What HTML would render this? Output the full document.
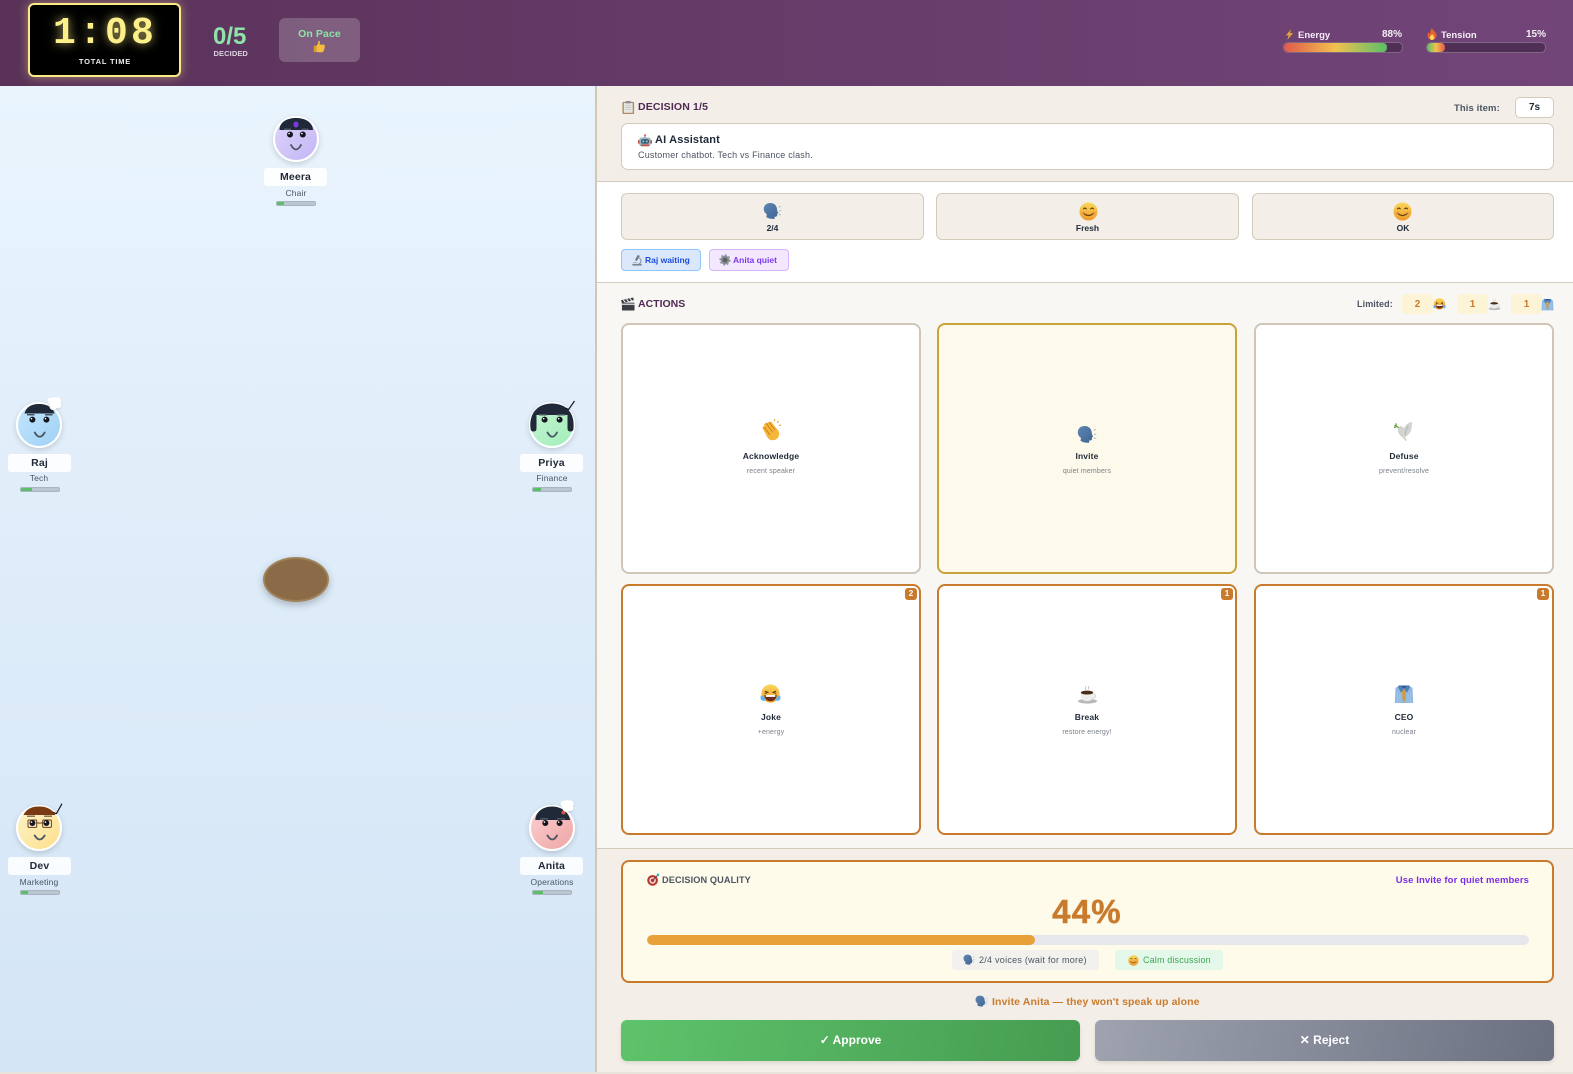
<!DOCTYPE html>
<html><head><meta charset="utf-8"><title>Meeting</title>
<style>
*{box-sizing:border-box;margin:0;padding:0}
html,body{width:1573px;height:1074px;overflow:hidden;background:#e8e4dc;font-family:"Liberation Sans",sans-serif}
.a{position:absolute}
.t{position:absolute;white-space:nowrap;line-height:1}
.c{text-align:center}
.b{font-weight:700}
svg{position:absolute;overflow:visible}
.av{position:absolute;width:46px;height:46px;border-radius:50%;border:2px solid #fff;box-shadow:0 2px 6px rgba(0,0,0,.16)}
.nm{position:absolute;width:63px;height:18px;background:rgba(255,255,255,.85);border-radius:3px;font:700 10.5px/18px "Liberation Sans",sans-serif;color:#1f2937;text-align:center;letter-spacing:.15px}
.rl{position:absolute;width:80px;font-size:8.5px;line-height:10px;color:#4b5563;text-align:center;letter-spacing:.15px}
.en{position:absolute;width:40px;height:5px;background:#b9c5cf;border:1px solid #a9b5bf;border-radius:2px;overflow:hidden}
.en i{display:block;height:100%;background:#5abf68}
.card{position:absolute;width:300px;height:251px;border:2px solid #cfc6b8;border-radius:8px;background:#fff}
.stat{position:absolute;top:193px;height:47px;background:#f3eee8;border:1px solid #d5cbbd;border-radius:6px}
.ti{font:700 8.5px/10px "Liberation Sans",sans-serif;color:#1f2937;letter-spacing:.15px}
.su{font:7px/8px "Liberation Sans",sans-serif;color:#7a808a;letter-spacing:.15px}
.bd{position:absolute;width:12px;height:12px;background:#c97b2d;border-radius:3px;color:#fff;font:700 8px/12px "Liberation Sans",sans-serif;text-align:center}
.lim{position:absolute;top:294px;width:31px;height:20px;background:#fdf3d6;border-radius:4px;color:#c97b2d;font:700 10px/22px "Liberation Sans",sans-serif;text-align:center}
.eye{fill:#15151f}
.hl{fill:#fff}
.sm{stroke:#4b5563;stroke-width:1.8;fill:none;stroke-linecap:round}
.cl{filter:drop-shadow(0 1px 1px rgba(0,0,0,.12))}
</style></head><body>
<svg width="0" height="0" style="position:absolute"><defs>
<linearGradient id="gy" x1="0" y1="0" x2="0" y2="1"><stop offset="0" stop-color="#fbd75a"/><stop offset="1" stop-color="#ee9a2b"/></linearGradient>
<linearGradient id="gs" x1="0" y1="0" x2="1" y2="1"><stop offset="0" stop-color="#5f86b3"/><stop offset="1" stop-color="#3f6593"/></linearGradient>
<symbol id="head" viewBox="0 0 20 20"><path d="M7.500 1C3.600 1 .8 3.700.8 7.300c0 2.400 1.200 4.400 3.100 5.500v.5l-.4 2.500c2 1.800 6 2.300 8.800 1.800l-.2-2.100h1.300c1-.1 1.600-.8 1.600-1.800v-1.500l1.200-.6-1.300-2.500C14.900 4.500 12.700 1 7.500 1z" fill="url(#gs)"/><path d="M16.700 5.500l1.900-1.200M17 9.200h2.300M16.700 12.500l1.900 1.300" stroke="#93aac4" stroke-width=".9" fill="none"/></symbol>
<symbol id="smile" viewBox="0 0 20 20"><circle cx="10" cy="10" r="9.500" fill="url(#gy)"/><path d="M4.500 7.500q1.700-2.200 3.400 0M12.100 7.500q1.700-2.200 3.400 0" stroke="#5b3a14" stroke-width="1.100" fill="none"/><path d="M4.500 11.500q5.500 5.500 11 0" stroke="#6b4216" stroke-width="1.200" fill="none"/><ellipse cx="4.300" cy="11.500" rx="2" ry="1.200" fill="#f28a55" opacity=".5"/><ellipse cx="15.700" cy="11.500" rx="2" ry="1.200" fill="#f28a55" opacity=".5"/></symbol>
<symbol id="clap" viewBox="0 0 22 22"><path d="M4 5l7-2.500 7.500 9.500c1.500 3 .5 6.500-2.500 8.500-3.500 1.500-7 .5-8.500-2L2.500 9c-.5-1 1-2 1.800-1.200L4 5z" fill="#f6b63a"/><path d="M6 4l6.500 9M9 3l6 8M4 8l6 8" stroke="#c47c14" stroke-width=".9" fill="none"/><path d="M14 2l1-1.800M17 3.500l1.700-1.300M19 6.500l2-.5" stroke="#e0962a" stroke-width="1"/></symbol>
<symbol id="dove" viewBox="0 0 22 22"><path d="M20 1c-4 .5-7 3-8.500 6.500C10 5.500 8 4.500 6.500 6 4.500 7.500 4.500 11 7 14.500c1 1.500 2 2 2.500 2l3.500 4.500 1.500-.8-2-3.500c3-1 6.500-5 7-9.500.2-2.500.5-4.500.5-6.200z" fill="#d2d4d0"/><path d="M16 5c-2 3-3 6-3 10" stroke="#a9aca8" stroke-width=".8" fill="none"/><path d="M6 7L1.500 4.500M3 2.500l.5 3M1 6.500l2 .5" stroke="#5e9a3a" stroke-width="1.300" fill="none"/></symbol>
<symbol id="joke" viewBox="0 0 22 22"><circle cx="11" cy="10" r="9.500" fill="url(#gy)"/><path d="M5 7.500l3.200 1.200L5 10M17 7.500l-3.200 1.200L17 10" stroke="#5b3a14" stroke-width="1.100" fill="none"/><path d="M4.500 11.500h13c0 4-3 6.500-6.500 6.500s-6.500-2.500-6.500-6.500z" fill="#6b2c1d"/><rect x="6" y="11.500" width="10" height="2" fill="#fff"/><path d="M1 12c2 0 4 1.500 4.500 5-2 1.500-4.500 0-5-2 0-1.500.3-2.500.5-3zM21 12c-2 0-4 1.500-4.500 5 2 1.500 4.500 0 5-2 0-1.500-.3-2.500-.5-3z" fill="#63b3ee"/></symbol>
<symbol id="coffee" viewBox="0 0 22 22"><ellipse cx="11" cy="18" rx="10" ry="2.500" fill="#b6b8ba"/><path d="M4 9h13v4c0 3-2.500 5-6.500 5S4 16 4 13z" fill="#eceded"/><ellipse cx="10.500" cy="9" rx="6.500" ry="2" fill="#4a2c17"/><path d="M17 10.500c3 0 3 4-.5 4.500" stroke="#d5d6d7" stroke-width="1.300" fill="none"/><path d="M9 6c-1-1.500 1-2 0-4M12 6c-1-1.500 1-2 0-4" stroke="#bbb" stroke-width=".8" fill="none"/></symbol>
<symbol id="shirt" viewBox="0 0 20 20"><path d="M5 1.500L1.500 4 .8 19h18.400l-.7-15L15 1.500z" fill="#8fb8e3"/><path d="M6 1.500h8L10 5z" fill="#2c5a94"/><path d="M5.500 1l4.500 4.500-3 3L4 3zM14.500 1L10 5.500l3 3L16 3z" fill="#4d7fb8"/><path d="M9 5.500h2l.8 2-.5 8-1.300 3.500-1.300-3.500-.5-8z" fill="#d89a2f"/><path d="M3.500 8v11M6 9v10M14 9v10M16.500 8v11" stroke="#a8cbef" stroke-width=".7"/></symbol>
<symbol id="target" viewBox="0 0 14 14"><circle cx="6" cy="8" r="5.700" fill="#b5322c"/><circle cx="6" cy="8" r="3.600" fill="#f0d8d4"/><circle cx="6" cy="8" r="1.900" fill="#c8372f"/><path d="M6 8l6-6" stroke="#444" stroke-width="1"/><path d="M10.500 1l2.500-.5-.3 2.800-2 .2z" fill="#35a3b5"/></symbol>
<symbol id="robot" viewBox="0 0 16 16"><rect x="1.500" y="4" width="13" height="10" rx="2.500" fill="#9bb6c4"/><rect x="3.500" y="6" width="9" height="5" rx="2" fill="#3c4a57"/><circle cx="6" cy="8.500" r="1.300" fill="#65c7e8"/><circle cx="10" cy="8.500" r="1.300" fill="#65c7e8"/><rect x="7.300" y="1.500" width="1.400" height="3" fill="#7f98a6"/><circle cx="8" cy="1.500" r="1.200" fill="#e05a4b"/><rect x="0" y="7" width="1.700" height="4" fill="#c2533f"/><rect x="14.300" y="7" width="1.700" height="4" fill="#c2533f"/><rect x="3.500" y="12" width="9" height="2" fill="#c2533f"/></symbol>
<symbol id="micro" viewBox="0 0 14 14"><path d="M8 1l2.300 1.200-3.500 6-2.200-1.200z" fill="#6d7884"/><path d="M9.500 4.500c3 1.800 2.700 6-.3 7" stroke="#8f98a2" stroke-width="1.400" fill="none"/><rect x="1.500" y="11.500" width="11" height="2" rx=".7" fill="#7c858f"/><rect x="2.500" y="9.500" width="5" height="1" fill="#a9b0b7"/></symbol>
<symbol id="gear" viewBox="0 0 14 14"><circle cx="7" cy="7" r="5.200" fill="#8a8f96"/><circle cx="7" cy="7" r="5.800" fill="none" stroke="#8a8f96" stroke-width="1.400" stroke-dasharray="2.200 2.300"/><circle cx="7" cy="7" r="2.800" fill="#5b6068"/></symbol>
<symbol id="clip" viewBox="0 0 14 14"><rect x=".5" y="1" width="12.500" height="13" rx="1" fill="#b08d5e"/><rect x="2" y="2.200" width="9.500" height="10.500" fill="#e6e6e2"/><rect x="4" y="0" width="5.500" height="2.500" rx=".6" fill="#8a8f96"/><path d="M3.500 5h6.500M3.500 7h6.500M3.500 9h6.500" stroke="#c0c0bc" stroke-width=".7"/></symbol>
<symbol id="clapper" viewBox="0 0 15 15"><rect x="1" y="6" width="13.500" height="8.500" rx=".6" fill="#3b3f45"/><path d="M0 3.500L13 .5l.8 2.800L1 6.500z" fill="#3b3f45"/><path d="M2.500 3l2 2.700M6 2.200l2 2.700M9.500 1.400l2 2.700" stroke="#eee" stroke-width="1.100"/><rect x="1" y="7" width="13.500" height="1.600" fill="#c9ccd0"/></symbol>
<symbol id="thumb" viewBox="0 0 14 14"><path d="M6 1c1.200-.3 1.800.7 1.500 2L7 5h4.500c1.300 0 1.600 1.500.8 2.200.7.700.5 1.800-.3 2.200.4.800.1 1.700-.7 2 .2 1-.5 1.800-1.500 1.800H6c-1 0-1.700-.3-2.500-.7V6.500C5 5 5.800 3 6 1z" fill="#f5bd3f"/><rect x=".8" y="6" width="2.700" height="7" rx=".5" fill="#e09a2a"/></symbol>
<symbol id="bolt" viewBox="0 0 10 12"><path d="M7 0L1 7h3L2.500 12 9 4.500H5.500z" fill="#e8a43a"/></symbol>
<symbol id="flame" viewBox="0 0 10 12"><path d="M5 0c.5 2.500 4.500 4 4.500 7.500C9.500 10 7.500 12 5 12S.5 10 .5 7.500C.5 6 1.200 5 2 4.200c.2 1 .7 1.500 1.200 1.700C3 4 3.800 1.500 5 0z" fill="#e8622c"/><path d="M5 6c.5 1 2.200 1.800 2.200 3.500C7.200 10.800 6.200 12 5 12s-2.200-1.200-2.200-2.500C2.800 8 4.500 7.500 5 6z" fill="#fbd75a"/></symbol>
</defs></svg>

<!-- header -->
<div class="a" style="left:0;top:0;width:1573px;height:86px;background:linear-gradient(90deg,#5a3259,#724579)"></div>
<div class="a" style="left:28px;top:3px;width:153px;height:74px;background:#000;border:2px solid #fbe98a;border-radius:6px;box-shadow:0 0 10px rgba(253,240,138,.45)"></div>
<div class="t b" style="left:53px;top:13px;width:106px;font-family:'Liberation Mono',monospace;font-size:38px;letter-spacing:3.2px;color:#fdf08a;text-shadow:0 0 10px rgba(253,240,138,.7);line-height:42px">1:08</div>
<div class="t b c" style="left:54px;top:58px;width:102px;font-size:7.5px;letter-spacing:.8px;color:#eee">TOTAL TIME</div>
<div class="t b" style="left:213px;top:25px;font-size:24px;color:#8ee4a8">0/5</div>
<div class="t b" style="left:213.5px;top:50px;font-size:7.5px;color:#ddd1e0;letter-spacing:.1px">DECIDED</div>
<div class="a" style="left:279px;top:18px;width:81px;height:44px;background:rgba(255,255,255,.2);border-radius:6px"></div>
<div class="t b c" style="left:279px;top:29px;width:81px;font-size:10.5px;color:#8ee4a8;letter-spacing:.1px">On Pace</div>
<svg style="left:313px;top:40px" width="13" height="13"><use href="#thumb" width="13" height="13"/></svg>

<svg style="left:1285px;top:29px" width="9" height="11"><use href="#bolt" width="9" height="11"/></svg>
<div class="t b" style="left:1298px;top:31px;font-size:9.5px;color:#f5eef7">Energy</div>
<div class="t b" style="right:171px;top:30px;font-size:10px;color:#f5eef7">88%</div>
<div class="a" style="left:1283px;top:42px;width:120px;height:11px;background:#502f57;border:1px solid rgba(255,255,255,.28);border-radius:5px;overflow:hidden"><div style="width:103px;height:100%;background:linear-gradient(90deg,#e05a4b,#f2c14e 50%,#5abf68);border-radius:4px"></div></div>
<svg style="left:1427px;top:28px" width="10" height="12"><use href="#flame" width="10" height="12"/></svg>
<div class="t b" style="left:1441px;top:31px;font-size:9.5px;color:#f5eef7">Tension</div>
<div class="t b" style="right:27px;top:30px;font-size:10px;color:#f5eef7">15%</div>
<div class="a" style="left:1426px;top:42px;width:120px;height:11px;background:#502f57;border:1px solid rgba(255,255,255,.28);border-radius:5px;overflow:hidden"><div style="width:18px;height:100%;background:linear-gradient(90deg,#5abf68,#f2c14e 50%,#e05a4b);border-radius:4px"></div></div>

<!-- left panel -->
<div class="a" style="left:0;top:86px;width:597px;height:986px;background:linear-gradient(180deg,#e9f4fd,#d4e5f6);border-right:2px solid #d0c7b8"></div>
<div class="a" style="left:263px;top:557px;width:66px;height:45px;border-radius:50%;background:#8b6b47;border:2px solid #a0835a;box-shadow:0 3px 8px rgba(0,0,0,.25)"></div>

<!-- Meera -->
<div class="av" style="left:273px;top:116px;background:linear-gradient(135deg,#ded5fc,#c4b5f5)"></div>
<svg style="left:296px;top:139.3px" width="1" height="1"><path d="M-16.500-9C-16.500-17-9-21 0-21S16.500-17 17-9z" fill="#1f2937"/><ellipse cx="0" cy="-14.500" rx="2.500" ry="3" fill="#7c3aed"/><path d="M-12-9.700h7M5.500-9.700h7" stroke="#4b5563" stroke-width="1.500"/><circle class="eye" cx="-6" cy="-4.500" r="3"/><circle class="eye" cx="6.800" cy="-4.500" r="3"/><circle class="hl" cx="-6.900" cy="-5.400" r=".8"/><circle class="hl" cx="5.900" cy="-5.400" r=".8"/><path class="sm" d="M-5 6Q0 15 5 6"/></svg>
<div class="nm" style="left:264px;top:168px">Meera</div>
<div class="rl" style="left:256px;top:188px">Chair</div>
<div class="en" style="left:276px;top:201px"><i style="width:7px"></i></div>

<!-- Raj -->
<div class="av" style="left:16px;top:402px;background:linear-gradient(135deg,#c4e6fb,#9fd1f7)"></div>
<svg style="left:39.3px;top:424.7px" width="1" height="1"><path d="M-14.500-11.500C-13-17.500-8-21 0-21S14-17.500 15.500-11.500z" fill="#1f2937"/><path d="M-12-10.300h7.500M6-10.300h7.500" stroke="#4b5563" stroke-width="1.500"/><circle class="eye" cx="-6.600" cy="-5.400" r="3"/><circle class="eye" cx="7.400" cy="-5.400" r="3"/><circle class="hl" cx="-7.500" cy="-6.300" r=".8"/><circle class="hl" cx="6.500" cy="-6.300" r=".8"/><path class="sm" d="M-4.300 7.500Q.7 16 5.700 7.500"/><g class="cl" fill="#fff"><circle cx="15" cy="-20" r="4"/><circle cx="18.500" cy="-24" r="3.700"/><circle cx="12" cy="-24" r="3.500"/><circle cx="15.500" cy="-25" r="3"/><circle cx="19" cy="-20" r="3.400"/><circle cx="14" cy="-18.500" r="3.500"/></g></svg>
<div class="nm" style="left:8px;top:454px">Raj</div>
<div class="rl" style="left:-1px;top:473px">Tech</div>
<div class="en" style="left:20px;top:487px"><i style="width:11px"></i></div>

<!-- Priya -->
<div class="av" style="left:529px;top:402px;background:linear-gradient(135deg,#c3f4d2,#a3eeb9)"></div>
<svg style="left:551.7px;top:424.7px" width="1" height="1"><path d="M-21.500 3C-23-12-14-21.500 0-21.500S23-12 21.500 3c0 2.500-1 3.500-3 3.500s-3-1-3-3.500V-10h-31V3c0 2.500-1 3.500-3 3.500s-3-1-3-3.500z" fill="#1f2937"/><path d="M-13-10.300h8M5-10.300h8" stroke="#4b5563" stroke-width="1.500"/><circle class="eye" cx="-7.400" cy="-5.400" r="3"/><circle class="eye" cx="7.600" cy="-5.400" r="3"/><circle class="hl" cx="-8.300" cy="-6.300" r=".8"/><circle class="hl" cx="6.700" cy="-6.300" r=".8"/><path class="sm" d="M-4.500 7.500Q.3 16 5 7.500"/><path d="M13.300-17l3.300 1.500L22.500-24" stroke="#111" stroke-width="1.100" fill="none"/></svg>
<div class="nm" style="left:520px;top:454px">Priya</div>
<div class="rl" style="left:512px;top:473px">Finance</div>
<div class="en" style="left:532px;top:487px"><i style="width:8px"></i></div>

<!-- Dev -->
<div class="av" style="left:16px;top:805.3px;background:linear-gradient(135deg,#fdf2c8,#fde08c)"></div>
<svg style="left:39.3px;top:828.3px" width="1" height="1"><path d="M-15.500-13C-13-18.500-8-21.500 0-21.500S13.500-18.500 16.500-13z" fill="#7a3a12"/><path d="M-12-11.800h8M5-11.800h8" stroke="#7a6650" stroke-width="1.300"/><rect x="-11" y="-8" width="8.700" height="7.400" rx="1" fill="rgba(255,255,255,.3)" stroke="#6b3a16" stroke-width="1"/><rect x="3.700" y="-8" width="8.700" height="7.400" rx="1" fill="rgba(255,255,255,.3)" stroke="#6b3a16" stroke-width="1"/><path d="M-2.300-5H3.700" stroke="#6b3a16" stroke-width="1"/><circle class="eye" cx="-6.600" cy="-5" r="3"/><circle class="eye" cx="7.400" cy="-5" r="3"/><circle class="hl" cx="-7.500" cy="-5.900" r=".8"/><circle class="hl" cx="6.500" cy="-5.900" r=".8"/><path class="sm" d="M-4.300 7.500Q.7 15.500 5.700 7.500"/><path d="M14-15.600l3.400 1.300L23-24.300" stroke="#111" stroke-width="1.100" fill="none"/></svg>
<div class="nm" style="left:8px;top:857px">Dev</div>
<div class="rl" style="left:-1px;top:876.5px">Marketing</div>
<div class="en" style="left:20px;top:890px"><i style="width:7px"></i></div>

<!-- Anita -->
<div class="av" style="left:529px;top:805.3px;background:linear-gradient(135deg,#fad0d0,#f0a5a5)"></div>
<svg style="left:551.7px;top:828.3px" width="1" height="1"><path d="M-16.700-8C-16.500-16-9-21.500 0-21.500S17-16 18-8z" fill="#1f2937"/><path d="M-12-9.300h8M5-9.300h8" stroke="#4b5563" stroke-width="1.500"/><circle class="eye" cx="-6.700" cy="-5" r="3"/><circle class="eye" cx="7.600" cy="-5" r="3"/><circle class="hl" cx="-7.600" cy="-5.900" r=".8"/><circle class="hl" cx="6.700" cy="-5.900" r=".8"/><path class="sm" d="M-4.500 7.500Q.3 15.500 5 7.500"/><circle cx="11.500" cy="-15.500" r="2" fill="#d9534f"/><g class="cl" fill="#fff"><circle cx="14.500" cy="-20" r="4"/><circle cx="18" cy="-24" r="3.700"/><circle cx="12" cy="-24" r="3.500"/><circle cx="15" cy="-25" r="3"/><circle cx="18.500" cy="-20" r="3"/></g></svg>
<div class="nm" style="left:520px;top:857px">Anita</div>
<div class="rl" style="left:512px;top:876.5px">Operations</div>
<div class="en" style="left:532px;top:890px"><i style="width:10px"></i></div>

<!-- right sections -->
<div class="a" style="left:597px;top:86px;width:976px;height:96px;background:#f3eee8;border-bottom:1px solid #d5cbbd"></div>
<div class="a" style="left:597px;top:182px;width:976px;height:101px;background:#fff;border-bottom:1px solid #d5cbbd"></div>
<div class="a" style="left:597px;top:283px;width:976px;height:566px;background:#f9f7f3;border-bottom:1px solid #d5cbbd"></div>
<div class="a" style="left:597px;top:849px;width:976px;height:223px;background:#f3eee8"></div>

<svg style="left:622px;top:101px" width="13" height="13"><use href="#clip" width="13" height="13"/></svg>
<div class="t b" style="left:638px;top:102px;font-size:10.5px;color:#4f2a55;letter-spacing:.15px">DECISION 1/5</div>
<div class="t b" style="left:1454px;top:104px;font-size:9.5px;color:#4b5563;letter-spacing:.1px">This item:</div>
<div class="a b c" style="left:1515px;top:97px;width:39px;height:21px;background:#fff;border:1px solid #d5cbbd;border-radius:5px;font-size:10px;line-height:20px;color:#1f2937">7s</div>
<div class="a" style="left:621px;top:123px;width:933px;height:47px;background:#fff;border:1px solid #d5cbbd;border-radius:7px"></div>
<svg style="left:638px;top:134px" width="14" height="14"><use href="#robot" width="14" height="14"/></svg>
<div class="t b" style="left:655px;top:135px;font-size:11px;color:#1f2937;letter-spacing:.15px">AI Assistant</div>
<div class="t" style="left:638px;top:151px;font-size:9px;color:#4b5563;letter-spacing:.2px">Customer chatbot. Tech vs Finance clash.</div>

<div class="stat" style="left:621px;width:303px"></div>
<div class="stat" style="left:936px;width:303px"></div>
<div class="stat" style="left:1252px;width:302px"></div>
<svg style="left:763px;top:202px" width="19" height="19"><use href="#head" width="19" height="19"/></svg>
<svg style="left:1079px;top:202px" width="19" height="19"><use href="#smile" width="19" height="19"/></svg>
<svg style="left:1393px;top:202px" width="19" height="19"><use href="#smile" width="19" height="19"/></svg>
<div class="t b c" style="left:621px;top:224px;width:303px;font-size:8.5px;color:#1f2937">2/4</div>
<div class="t b c" style="left:936px;top:224px;width:303px;font-size:8.5px;color:#1f2937">Fresh</div>
<div class="t b c" style="left:1252px;top:224px;width:302px;font-size:8.5px;color:#1f2937">OK</div>

<div class="a" style="left:621px;top:249px;width:80px;height:22px;background:#dbe8fc;border:1px solid #93c5fd;border-radius:4px"></div>
<svg style="left:631px;top:254px" width="12" height="12"><use href="#micro" width="12" height="12"/></svg>
<div class="t b" style="left:645px;top:255.5px;font-size:8.5px;color:#1d4ed8">Raj waiting</div>
<div class="a" style="left:709px;top:249px;width:80px;height:22px;background:#f3e8ff;border:1px solid #d8b4fe;border-radius:4px"></div>
<svg style="left:719px;top:254px" width="12" height="12"><use href="#gear" width="12" height="12"/></svg>
<div class="t b" style="left:733px;top:255.5px;font-size:8.5px;color:#7c3aed">Anita quiet</div>

<svg style="left:621px;top:297px" width="14" height="14"><use href="#clapper" width="14" height="14"/></svg>
<div class="t b" style="left:638px;top:299px;font-size:10.5px;color:#4f2a55">ACTIONS</div>
<div class="t b" style="left:1357px;top:300px;font-size:9px;color:#4b5563;letter-spacing:.1px">Limited:</div>
<div class="lim" style="left:1402px">2</div><svg style="left:1433px;top:298px" width="13" height="13"><use href="#joke" width="13" height="13"/></svg>
<div class="lim" style="left:1457px">1</div><svg style="left:1488px;top:298px" width="13" height="13"><use href="#coffee" width="13" height="13"/></svg>
<div class="lim" style="left:1511px">1</div><svg style="left:1541px;top:298px" width="13" height="13"><use href="#shirt" width="13" height="13"/></svg>

<!-- cards -->
<div class="card" style="left:621px;top:323px"></div>
<div class="card" style="left:937px;top:323px;background:#fefaeb;border-color:#c9a23a"></div>
<div class="card" style="left:1254px;top:323px"></div>
<div class="card" style="left:621px;top:584px;border-color:#c97b2d"></div>
<div class="card" style="left:937px;top:584px;border-color:#c97b2d"></div>
<div class="card" style="left:1254px;top:584px;border-color:#c97b2d"></div>
<div class="bd" style="left:905px;top:588px">2</div>
<div class="bd" style="left:1221px;top:588px">1</div>
<div class="bd" style="left:1537px;top:588px">1</div>

<svg style="left:760px;top:419px" width="22" height="22"><use href="#clap" width="22" height="22"/></svg>
<svg style="left:1077px;top:425px" width="20" height="20"><use href="#head" width="20" height="20"/></svg>
<svg style="left:1393px;top:421px" width="21" height="21"><use href="#dove" width="21" height="21"/></svg>
<svg style="left:760px;top:684px" width="21" height="21"><use href="#joke" width="21" height="21"/></svg>
<svg style="left:1077px;top:684px" width="21" height="21"><use href="#coffee" width="21" height="21"/></svg>
<svg style="left:1394px;top:684px" width="20" height="20"><use href="#shirt" width="20" height="20"/></svg>

<div class="t ti c" style="left:621px;top:451px;width:300px">Acknowledge</div>
<div class="t su c" style="left:621px;top:467.5px;width:300px">recent speaker</div>
<div class="t ti c" style="left:937px;top:451px;width:300px">Invite</div>
<div class="t su c" style="left:937px;top:467.5px;width:300px">quiet members</div>
<div class="t ti c" style="left:1254px;top:451px;width:300px">Defuse</div>
<div class="t su c" style="left:1254px;top:467.5px;width:300px">prevent/resolve</div>
<div class="t ti c" style="left:621px;top:712px;width:300px">Joke</div>
<div class="t su c" style="left:621px;top:728.5px;width:300px">+energy</div>
<div class="t ti c" style="left:937px;top:712px;width:300px">Break</div>
<div class="t su c" style="left:937px;top:728.5px;width:300px">restore energy!</div>
<div class="t ti c" style="left:1254px;top:712px;width:300px">CEO</div>
<div class="t su c" style="left:1254px;top:728.5px;width:300px">nuclear</div>

<!-- quality -->
<div class="a" style="left:621px;top:860px;width:933px;height:123px;background:#fffbeb;border:2px solid #c97b2d;border-radius:8px"></div>
<svg style="left:647px;top:873px" width="13" height="13"><use href="#target" width="13" height="13"/></svg>
<div class="t b" style="left:662px;top:875.5px;font-size:9.2px;color:#4b5563;letter-spacing:.1px">DECISION QUALITY</div>
<div class="t b" style="right:44px;top:875.5px;font-size:9.5px;color:#7a2ee6;letter-spacing:.1px">Use Invite for quiet members</div>
<div class="t b c" style="left:947px;top:895px;width:280px;font-size:33px;letter-spacing:1.2px;-webkit-text-stroke:.5px #c97b2d;line-height:34px;color:#c97b2d">44%</div>
<div class="a" style="left:647px;top:935px;width:882px;height:10px;background:#e5e7eb;border-radius:5px;overflow:hidden"><div style="width:388px;height:100%;background:#e8a038;border-radius:5px"></div></div>
<div class="a" style="left:952px;top:950px;width:147px;height:20px;background:#f3f1ee;border-radius:3px"></div>
<svg style="left:963px;top:954px" width="12" height="12"><use href="#head" width="12" height="12"/></svg>
<div class="t" style="left:979px;top:955.5px;font-size:9px;color:#4b5563;letter-spacing:.26px">2/4 voices (wait for more)</div>
<div class="a" style="left:1115px;top:950px;width:108px;height:20px;background:#e4f8e9;border-radius:3px"></div>
<svg style="left:1128px;top:954.5px" width="11" height="11"><use href="#smile" width="11" height="11"/></svg>
<div class="t" style="left:1143px;top:955.5px;font-size:9px;color:#3ea655;letter-spacing:.15px">Calm discussion</div>

<svg style="left:975px;top:995px" width="13" height="13"><use href="#head" width="13" height="13"/></svg>
<div class="t b" style="left:992px;top:997px;font-size:10.5px;color:#c97b2d;letter-spacing:.12px">Invite Anita — they won't speak up alone</div>

<div class="a b c" style="left:621px;top:1020px;width:459px;height:41px;background:linear-gradient(100deg,#5ec36b,#469c51);border-radius:6px;box-shadow:0 2px 4px rgba(0,0,0,.1);color:#fff;font-size:12px;line-height:41px">✓ Approve</div>
<div class="a b c" style="left:1095px;top:1020px;width:459px;height:41px;background:linear-gradient(100deg,#9fa3b0,#6b7080);border-radius:6px;box-shadow:0 2px 4px rgba(0,0,0,.1);color:#fff;font-size:12px;line-height:41px">✕ Reject</div>
</body></html>
